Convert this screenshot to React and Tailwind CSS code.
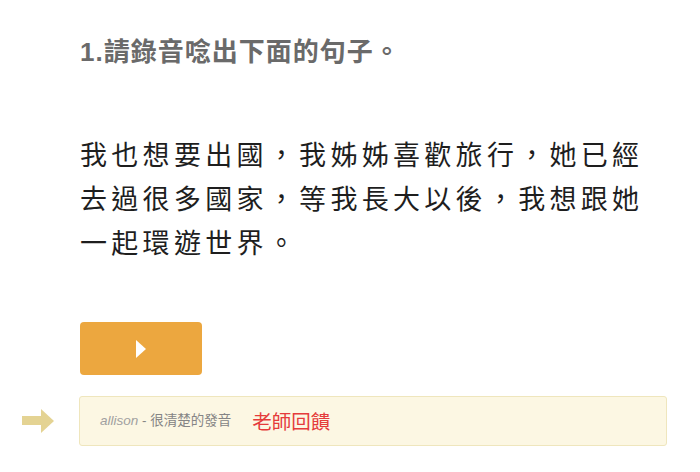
export default function App() {
  return (
    <div className="min-h-[472px] bg-white pt-[34px] pl-[80px]" style={{ fontFamily: '"Noto Sans CJK TC", "Noto Sans", sans-serif' }}>
      <h2 className="text-[26px] leading-[36px] font-bold tracking-[1px] text-[#6a6a6a]" style={{ fontFamily: '"Liberation Sans", "Noto Sans CJK TC", sans-serif' }}>
        1.請錄音唸出下面的句子。
      </h2>

      <p className="mt-[62px] w-[580px] text-[27px] leading-[44px] tracking-[4.3px] text-[#1e1e1e]">
        我也想要出國，我姊姊喜歡旅行，她已經去過很多國家，等我長大以後，我想跟她一起環遊世界。
      </p>

      <button className="mt-[58px] flex h-[53px] w-[122px] items-center justify-center rounded-[4px] bg-[#eca73f]">
        <svg width="10" height="18" viewBox="0 0 10 18">
          <polygon points="0,0 10,9 0,18" fill="#ffffff" />
        </svg>
      </button>

      <div className="-ml-[58px] mt-[21px] flex items-center">
        <svg width="32" height="24" viewBox="0 0 32 24" className="mr-[25px]">
          <rect x="0" y="7" width="20" height="9" fill="#e4d393" />
          <polygon points="19,0 32,12 19,24" fill="#e4d393" />
        </svg>
        <div className="flex h-[50px] w-[588px] items-center rounded-[3px] border border-[#efe6bd] bg-[#fcf7e3] pl-[20px]">
          <span className="text-[13.5px] text-[#858585]" style={{ fontFamily: '"Liberation Sans", "Noto Sans CJK TC", sans-serif' }}>
            <i className="text-[#a0a0a0]">allison</i> - 很清楚的發音
          </span>
          <span className="ml-[21px] text-[19.5px] text-[#e53b3b]">老師回饋</span>
        </div>
      </div>
    </div>
  );
}
